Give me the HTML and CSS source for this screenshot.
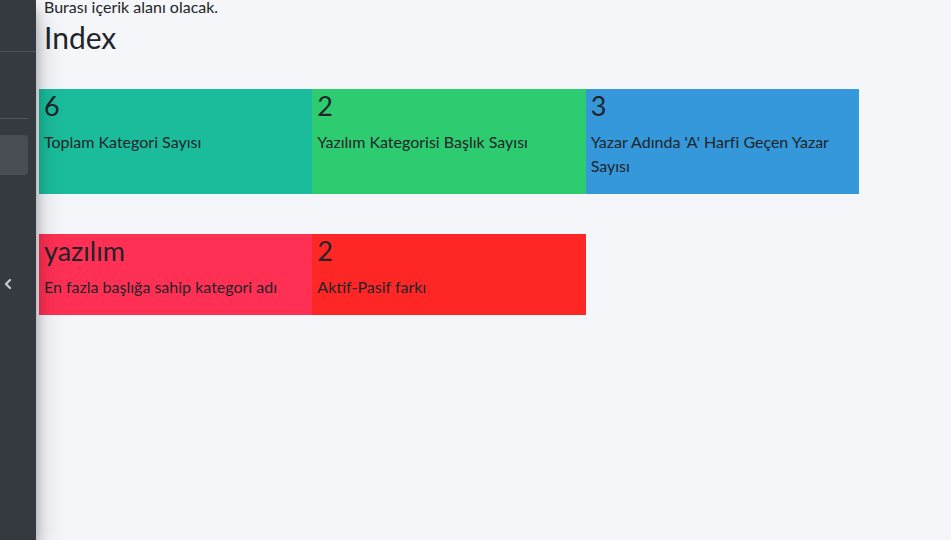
FILE: index.html
```html
<!DOCTYPE html>
<html lang="tr">
<head>
<meta charset="utf-8">
<title>Index</title>
<link rel="stylesheet" href="styles.css">
</head>
<body>
<div class="layout">
  <aside class="sidebar">
    <div class="brand"></div>
    <div class="user-panel"></div>
    <div class="nav-item"></div>
    <div class="toggle">
      <svg width="8" height="10" viewBox="0 0 8 10"><path d="M6 1 L2 5 L6 9" fill="none" stroke="#c2c7d0" stroke-width="2.4" stroke-linecap="round" stroke-linejoin="round"/></svg>
    </div>
  </aside>
  <main class="content">
    <p class="intro">Burası içerik alanı olacak.</p>
    <h1 class="title">Index</h1>
    <div class="cards">
      <div class="card teal"><h3>6</h3><p>Toplam Kategori Sayısı</p></div>
      <div class="card green"><h3>2</h3><p>Yazılım Kategorisi Başlık Sayısı</p></div>
      <div class="card blue"><h3>3</h3><p>Yazar Adında 'A' Harfi Geçen Yazar Sayısı</p></div>
    </div>
    <div class="cards second">
      <div class="card pink"><h3>yazılım</h3><p>En fazla başlığa sahip kategori adı</p></div>
      <div class="card red"><h3>2</h3><p>Aktif-Pasif farkı</p></div>
    </div>
  </main>
</div>
</body>
</html>
```
FILE: styles.css
```css
* { box-sizing: border-box; }
html, body { margin: 0; height: 100%; }
body {
  background: #f4f6f9;
  color: #212529;
  font-family: Lato, "Noto Sans", sans-serif;
  font-size: 16px;
  line-height: 24px;
  overflow: hidden;
}
.layout {
  display: flex;
  height: 540px;
}
.sidebar {
  position: relative;
  z-index: 2;
  width: 36px;
  flex: 0 0 36px;
  background: #343a40;
  box-shadow: 0 14px 28px rgba(0,0,0,.25), 0 10px 10px rgba(0,0,0,.22);
  display: flex;
  flex-direction: column;
}
.brand {
  height: 52px;
  border-bottom: 1px solid #4b545c;
}
.user-panel {
  height: 67px;
  margin-right: 8px;
  border-bottom: 1px solid #4f5962;
}
.nav-item {
  margin-top: 16px;
  height: 40px;
  margin-right: 8px;
  background: #494e54;
  border-radius: 0 4px 4px 0;
}
.toggle {
  margin-top: 104px;
  padding-left: 4px;
  height: 10px;
  display: flex;
}
.content {
  flex: 1;
  padding-left: 3px;
}
.intro {
  margin: -5px 0 0;
  padding-left: 5px;
}
.title {
  margin: 2px 0 0;
  padding-left: 5px;
  font-size: 30px;
  line-height: 1.1;
  font-weight: 400;
}
.cards {
  display: grid;
  grid-template-columns: repeat(3, 273.33px);
  margin-top: 35px;
}
.cards.second { margin-top: 40px; }
.card {
  padding: 3px 5px 0;
}
.card h3 {
  margin: 0 0 9px;
  font-size: 27px;
  line-height: 28.8px;
  font-weight: 400;
}
.card p {
  margin: 0 0 16px;
}
.teal { background: #1abc9c; }
.green { background: #2ecc71; }
.blue { background: #3498db; }
.pink { background: #ff3054; }
.red { background: #ff2626; }
```
